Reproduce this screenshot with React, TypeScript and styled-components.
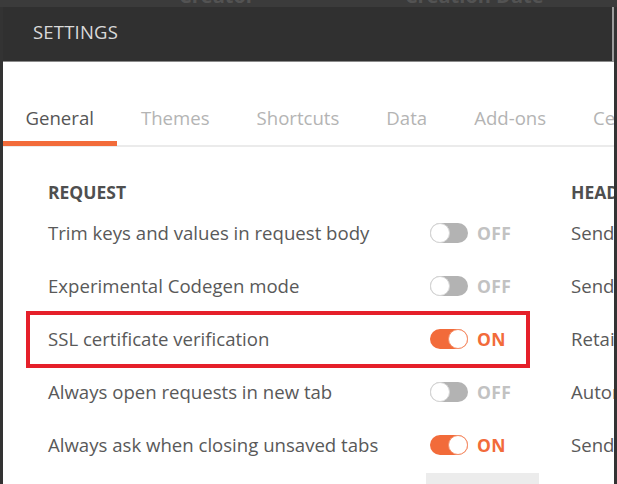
import React from 'react';
import styled, { createGlobalStyle } from 'styled-components';

const Global = createGlobalStyle`
  html, body { margin: 0; padding: 0; background: #343434; }
  body { font-family: "Open Sans", "Liberation Sans", sans-serif; }
  * { box-sizing: border-box; }
`;

const Page = styled.div`
  width: 617px;
  height: 484px;
  overflow: hidden;
  background: #333333;
  display: flex;
  flex-direction: column;
`;

const Backdrop = styled.div`
  height: 7px;
  flex: none;
  overflow: hidden;
  background: #3b3b3b;
  display: flex;
  padding-left: 179px;
  gap: 150px;
`;

const BackdropLabel = styled.span`
  font-size: 20px;
  line-height: 20px;
  font-weight: 700;
  margin-top: -14px;
  color: #535353;
  white-space: nowrap;
`;

const Stage = styled.div`
  flex: 1;
  display: flex;
  padding: 0 3px;
  min-height: 0;
`;

const Modal = styled.div`
  flex: 1;
  background: #ffffff;
  display: flex;
  flex-direction: column;
  overflow: hidden;
  min-width: 0;
`;

const Header = styled.div`
  height: 55px;
  flex: none;
  background: #303030;
  border-right: 2px solid #9c9c9c;
  border-bottom: 1px solid #8a8a8a;
  display: flex;
  align-items: center;
  padding: 0 0 5px 30px;
  color: #dadada;
  font-size: 18.5px;
  letter-spacing: 0.2px;
`;

const TabBar = styled.div`
  margin: 35px 0 0 -1px;
  display: flex;
  flex: none;
  border-bottom: 2px solid #ebebeb;
  white-space: nowrap;
`;

const Tab = styled.div<{ $active?: boolean }>`
  height: 49px;
  padding: 0 23.5px 4px;
  display: flex;
  align-items: center;
  font-size: 18.6px;
  color: ${(p) => (p.$active ? '#555555' : '#b4b4b4')};
  border-bottom: 5px solid ${(p) => (p.$active ? '#f26b3a' : 'transparent')};
  margin-bottom: -1px;
  flex: none;
`;

const Content = styled.div`
  display: flex;
  gap: 41px;
  padding: 34px 0 0 23px;
  white-space: nowrap;
`;

const Column = styled.div<{ $width: number }>`
  width: ${(p) => p.$width}px;
  flex: none;
  display: flex;
  flex-direction: column;
`;

const Heading = styled.div<{ $inset: number }>`
  font-size: 17.5px;
  line-height: 22px;
  font-weight: 700;
  color: #4f4f4f;
  margin-bottom: 3px;
  padding-left: ${(p) => p.$inset}px;
`;

const Row = styled.div<{ $inset: number; $highlight?: boolean }>`
  height: 53px;
  display: flex;
  align-items: center;
  padding-left: ${(p) => p.$inset}px;
  position: relative;
  &::after {
    content: '';
    display: ${(p) => (p.$highlight ? 'block' : 'none')};
    position: absolute;
    left: 0;
    right: 0;
    top: -1px;
    bottom: -3px;
    border: 4px solid #e5202a;
  }
`;

const Label = styled.div`
  flex: 1;
  font-size: 18.6px;
  color: #595959;
`;

const Switch = styled.div`
  width: 100px;
  flex: none;
  display: flex;
  align-items: center;
  gap: 9px;
`;

const Track = styled.span<{ $on: boolean }>`
  width: 38px;
  height: 20px;
  border-radius: 10px;
  background: ${(p) => (p.$on ? '#f26b3a' : '#b3b3b3')};
  display: flex;
  justify-content: ${(p) => (p.$on ? 'flex-end' : 'flex-start')};
  align-items: center;
  flex: none;
`;

const Knob = styled.span<{ $on: boolean }>`
  width: 20px;
  height: 20px;
  border-radius: 50%;
  background: #ffffff;
  border: 1.5px solid ${(p) => (p.$on ? '#f5906b' : '#d6d6d6')};
`;

const SwitchText = styled.span<{ $on: boolean }>`
  font-size: 17.5px;
  font-weight: 700;
  letter-spacing: 0.4px;
  color: ${(p) => (p.$on ? '#f26b3a' : '#c2c2c2')};
`;

const GreyBlock = styled.div`
  margin: 2px 0 0 400px;
  width: 113px;
  height: 20px;
  background: #ececec;
`;

const Toggle = ({ on }: { on: boolean }) => (
  <Switch>
    <Track $on={on}>
      <Knob $on={on} />
    </Track>
    <SwitchText $on={on}>{on ? 'ON' : 'OFF'}</SwitchText>
  </Switch>
);

const tabs = ['General', 'Themes', 'Shortcuts', 'Data', 'Add-ons', 'Certificates', 'Proxy', 'Update', 'About'];

const requestRows = [
  { label: 'Trim keys and values in request body', on: false },
  { label: 'Experimental Codegen mode', on: false },
  { label: 'SSL certificate verification', on: true, highlight: true },
  { label: 'Always open requests in new tab', on: false },
  { label: 'Always ask when closing unsaved tabs', on: true },
];

const headerRows = [
  'Send no-cache header',
  'Send Postman Token header',
  'Retain headers when clicking on links',
  'Automatically follow redirects',
  'Send anonymous usage data to Postman',
];

export default function App() {
  return (
    <Page>
      <Global />
      <Backdrop>
        <BackdropLabel>Creator</BackdropLabel>
        <BackdropLabel>Creation Date</BackdropLabel>
      </Backdrop>
      <Stage>
        <Modal>
          <Header>SETTINGS</Header>
          <TabBar>
            {tabs.map((t, i) => (
              <Tab key={t} $active={i === 0}>
                {t}
              </Tab>
            ))}
          </TabBar>
          <Content>
            <Column $width={504}>
              <Heading $inset={22}>REQUEST</Heading>
              {requestRows.map((r) => (
                <Row key={r.label} $inset={22} $highlight={r.highlight}>
                  <Label>{r.label}</Label>
                  <Toggle on={r.on} />
                </Row>
              ))}
              <GreyBlock />
            </Column>
            <Column $width={420}>
              <Heading $inset={0}>HEADERS</Heading>
              {headerRows.map((h) => (
                <Row key={h} $inset={0}>
                  <Label>{h}</Label>
                </Row>
              ))}
            </Column>
          </Content>
        </Modal>
      </Stage>
    </Page>
  );
}
